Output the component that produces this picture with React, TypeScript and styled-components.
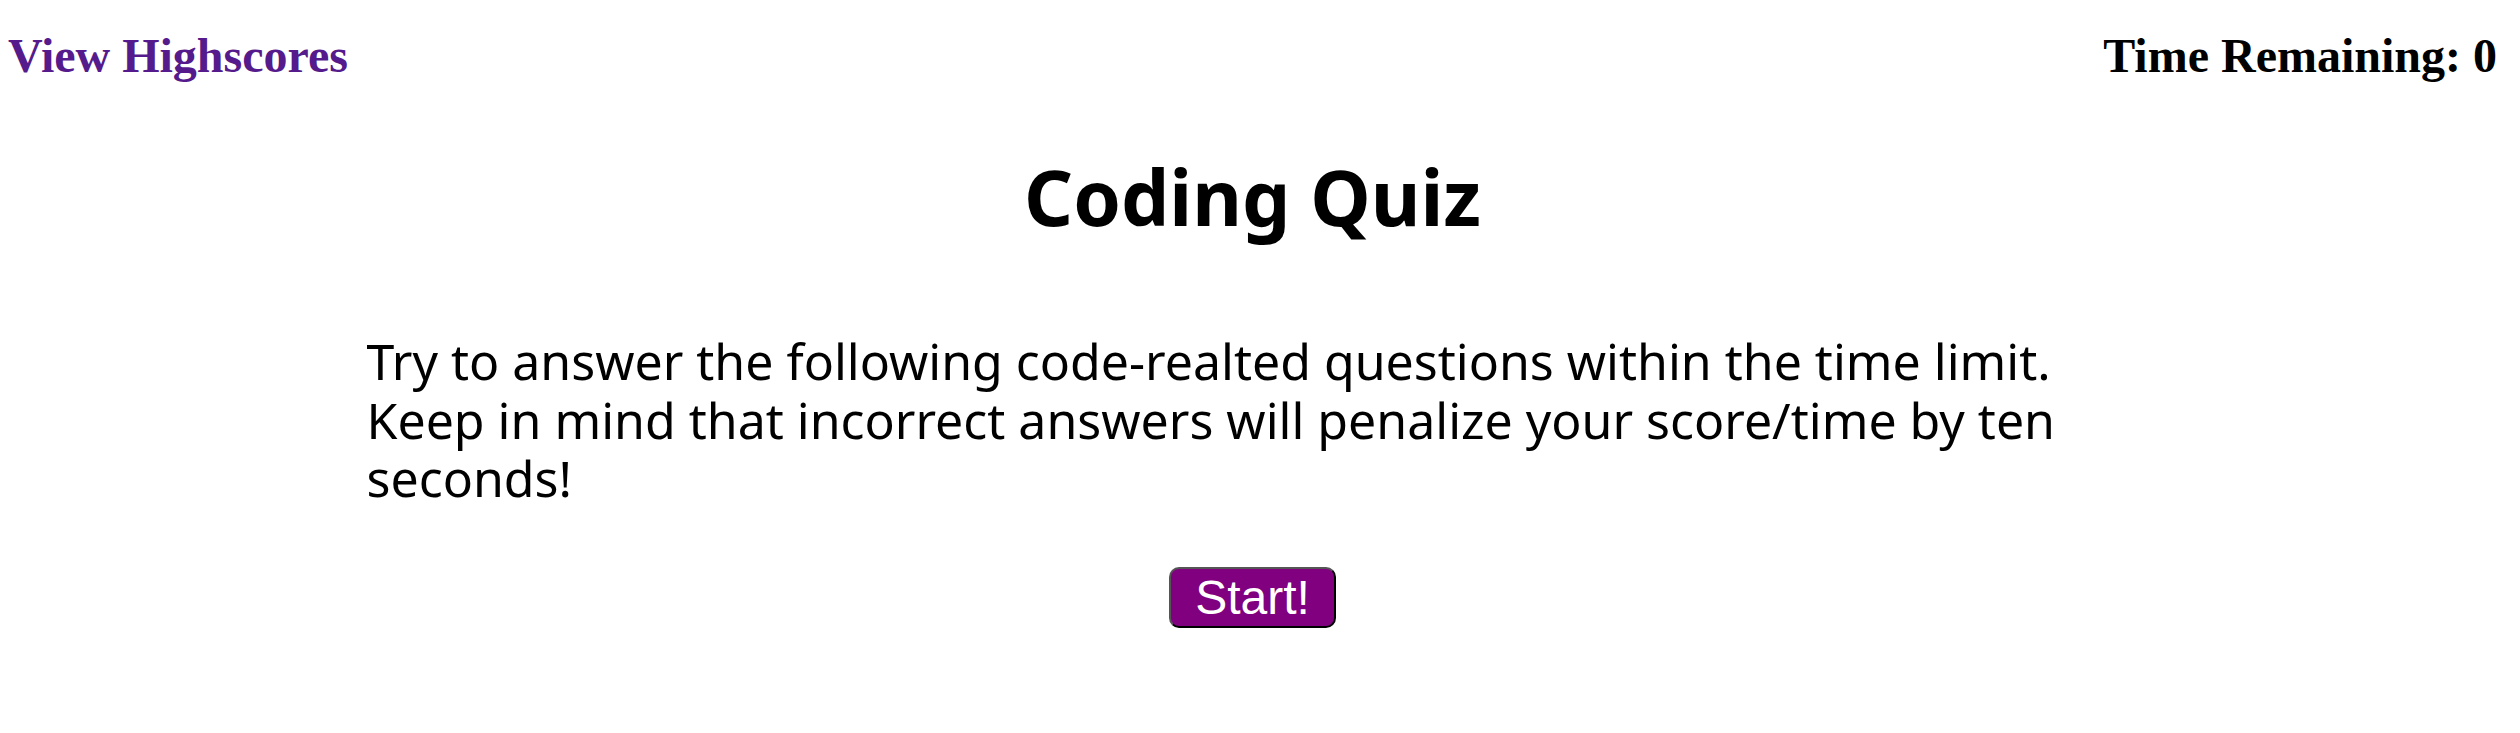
import React, { useState } from "react";
import styled, { createGlobalStyle } from "styled-components";

const GlobalStyle = createGlobalStyle`
  body {
    margin: 8px 23px 8px 8px;
    background: #fff;
    font-family: "Liberation Serif", "Times New Roman", serif;
  }
`;

const Header = styled.header`
  display: flex;
  align-items: center;
  justify-content: space-between;
  padding-top: 20px;
`;

const HighscoresLink = styled.a`
  font-family: "Liberation Serif", "Times New Roman", serif;
  font-size: 48px;
  font-weight: bold;
  color: #551a8b;
  text-decoration: none;
  cursor: pointer;
`;

const Timer = styled.span`
  font-family: "Liberation Serif", "Times New Roman", serif;
  font-size: 48px;
  font-weight: bold;
  color: #000;
`;

const Main = styled.main`
  display: flex;
  flex-direction: column;
  align-items: center;
  font-family: "Noto Sans", "Open Sans", sans-serif;
`;

const Title = styled.h1`
  margin: 61px 0 0;
  font-size: 76.5px;
  font-weight: 700;
  color: #000;
`;

const Intro = styled.p`
  width: 1772px;
  margin: 84px 0 0;
  font-size: 50px;
  line-height: 58.5px;
  color: #000;
`;

const StartButton = styled.button`
  margin-top: 59px;
  padding: 1px 24px;
  font-family: "Liberation Sans", Arial, sans-serif;
  font-size: 48px;
  color: #fff;
  background: #800080;
  border: 2px solid;
  border-color: #555 #000 #000 #555;
  border-radius: 10px;
  cursor: pointer;
`;

export default function App() {
  const [time] = useState(0);

  return (
    <>
      <GlobalStyle />
      <Header>
        <HighscoresLink href="#highscores">View Highscores</HighscoresLink>
        <Timer>Time Remaining: {time}</Timer>
      </Header>
      <Main>
        <Title>Coding Quiz</Title>
        <Intro>
          Try to answer the following code-realted questions within the time
          limit. Keep in mind that incorrect answers will penalize your
          score/time by ten seconds!
        </Intro>
        <StartButton type="button">Start!</StartButton>
      </Main>
    </>
  );
}
